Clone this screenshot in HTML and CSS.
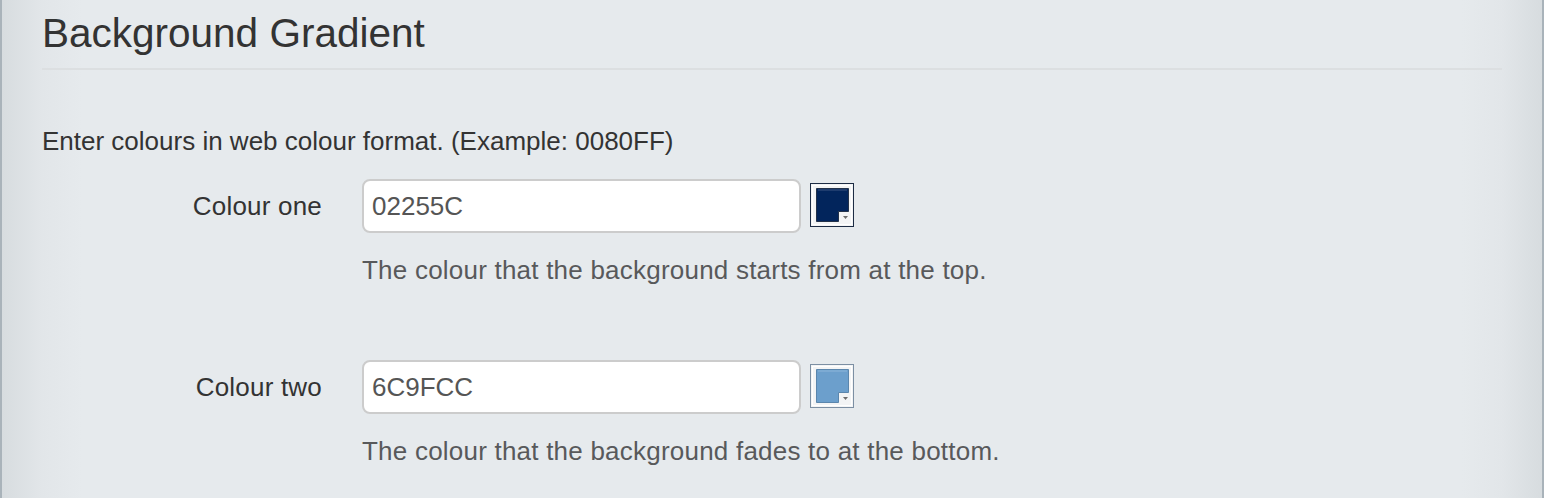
FILE: index.html
```html
<!DOCTYPE html>
<html>
<head>
<meta charset="utf-8">
<link rel="stylesheet" href="styles.css">
</head>
<body>
<div class="panel">
  <h3 class="title">Background Gradient</h3>
  <p class="intro">Enter colours in web colour format. (Example: 0080FF)</p>

  <div class="group">
    <div class="row">
      <label class="label" for="c1">Colour one</label>
      <input class="field" id="c1" type="text" value="02255C">
      <svg class="swatch" width="44" height="44" viewBox="0 0 44 44">
        <rect x="0.5" y="0.5" width="43" height="43" fill="#f3f4f5" stroke="#1d2c44"/>
        <rect x="2.5" y="2.5" width="39" height="39" fill="none" stroke="#ffffff"/>
        <path d="M6.5 5.5 H38.5 V28.5 H28.5 V38.5 H6.5 Z" fill="#02255c" stroke="#23324a"/>
        <path d="M8 7 H37" stroke="#3a5580" stroke-width="1"/>
        <polygon points="33,33 38,33 35.5,36" fill="#6d6d6d"/>
      </svg>
    </div>
    <p class="help">The colour that the background starts from at the top.</p>
  </div>

  <div class="group second">
    <div class="row">
      <label class="label" for="c2">Colour two</label>
      <input class="field" id="c2" type="text" value="6C9FCC">
      <svg class="swatch" width="44" height="44" viewBox="0 0 44 44">
        <rect x="0.5" y="0.5" width="43" height="43" fill="#f3f4f5" stroke="#7c8fa3"/>
        <rect x="2.5" y="2.5" width="39" height="39" fill="none" stroke="#ffffff"/>
        <path d="M6.5 5.5 H38.5 V28.5 H28.5 V38.5 H6.5 Z" fill="#6c9fcc" stroke="#5b86ad"/>
        <path d="M8 7 H37" stroke="#8db6da" stroke-width="1"/>
        <polygon points="33,33 38,33 35.5,36" fill="#6d6d6d"/>
      </svg>
    </div>
    <p class="help">The colour that the background fades to at the bottom.</p>
  </div>
</div>
</body>
</html>
```

FILE: styles.css
```css
html, body {
  margin: 0;
  padding: 0;
  height: 100%;
}

body {
  font-family: "Liberation Sans", Arial, Helvetica, sans-serif;
  color: #333333;
  background: #e6eaed;
}

.panel {
  box-sizing: border-box;
  min-height: 498px;
  border-left: 2px solid #a9b3ba;
  border-right: 2px solid #a9b3ba;
  padding: 11px 40px 0 40px;
  background: linear-gradient(to right,
    #d7dcdf 0px, #e2e6e9 40px, #e6eaed 80px,
    #e6eaed calc(100% - 80px), #e2e6e9 calc(100% - 40px), #d7dcdf 100%);
}

.title {
  margin: 0;
  font-size: 40.5px;
  font-weight: normal;
  line-height: 44px;
  color: #333333;
  padding-bottom: 13px;
  border-bottom: 2px solid #dcdfe1;
  width: 1460px;
}

.intro {
  margin: 53px 0 0 0;
  font-size: 26px;
  line-height: 37px;
  color: #333333;
}

.group {
  margin-top: 19px;
}

.group.second {
  margin-top: 71px;
}

.row {
  display: flex;
  align-items: center;
}

.label {
  width: 280px;
  text-align: right;
  font-size: 26px;
  line-height: 37px;
  letter-spacing: 0.2px;
  color: #333333;
  flex: none;
}

.field {
  box-sizing: border-box;
  margin-left: 40px;
  width: 439px;
  height: 54px;
  border: 2px solid #cccccc;
  border-radius: 8px;
  padding: 0 8px;
  font-family: "Liberation Sans", Arial, Helvetica, sans-serif;
  font-size: 26px;
  color: #555555;
  background: #ffffff;
  outline: none;
}

.swatch {
  display: block;
  margin-left: 9px;
  margin-top: -2px;
  flex: none;
}

.help {
  margin: 19px 0 0 320px;
  font-size: 26px;
  line-height: 37px;
  letter-spacing: 0.22px;
  color: #58595b;
}
```
